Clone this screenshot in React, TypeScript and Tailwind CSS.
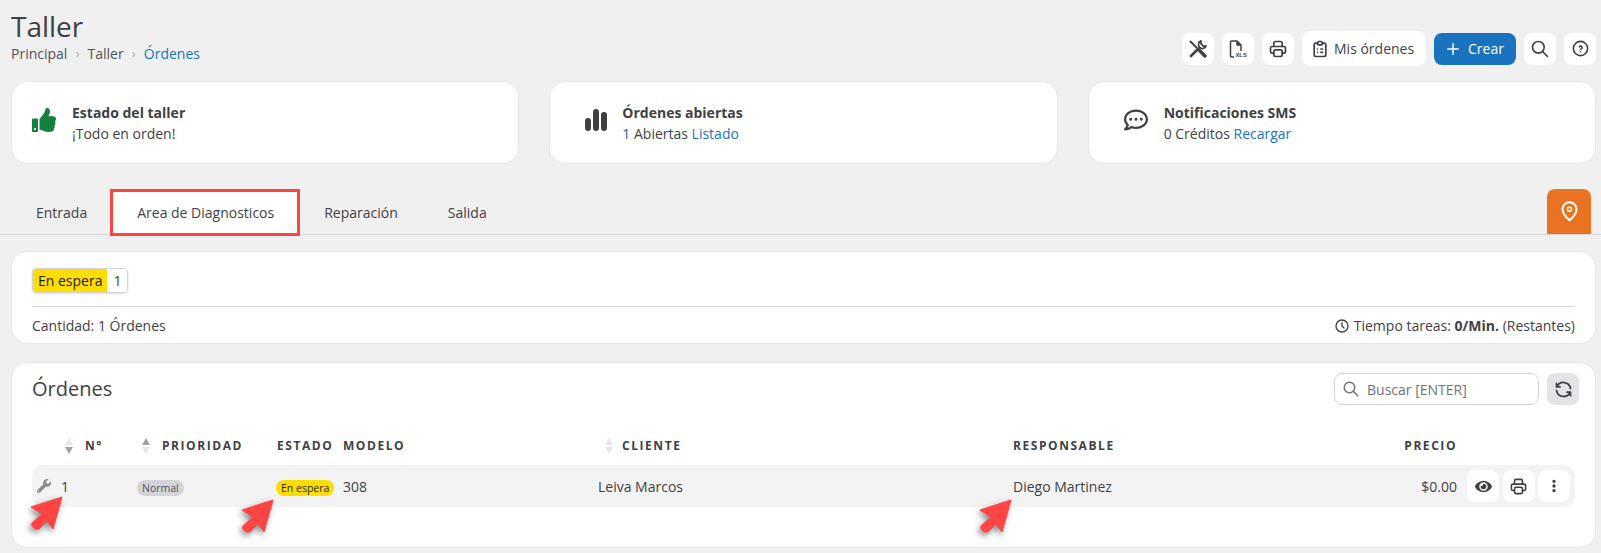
import React from "react";
import {
  TbClipboardList,
  TbClock,
  TbDotsVertical,
  TbHelpCircle,
  TbPlus,
  TbPrinter,
  TbRefresh,
  TbSearch,
} from "react-icons/tb";
import { FaEye, FaRegCommentDots, FaThumbsUp, FaWrench } from "react-icons/fa";

const tableCols = "grid grid-cols-[105px_140px_67px_254px_415px_1fr_118px] items-center";

function IconButton({ children }: { children: React.ReactNode }) {
  return (
    <button className="w-8 h-8 rounded-lg bg-white flex items-center justify-center text-[#3f3f46]">
      {children}
    </button>
  );
}

function ToolsIcon() {
  return (
    <svg width="20" height="20" viewBox="0 0 20 20" fill="none" stroke="#3f3f46" strokeLinecap="round">
      <path d="M2.5 2.5l6 6" strokeWidth="2" />
      <path d="M11.5 11.5l5.5 5.5" strokeWidth="3.4" />
      <path d="M3 17l7.5-7.5" strokeWidth="2.6" />
      <path d="M13 1.8A4 4 0 1 0 18.2 7L15.5 7.2 13 4.8z" strokeWidth="1.7" strokeLinejoin="round" />
    </svg>
  );
}

function XlsIcon() {
  return (
    <svg width="20" height="20" viewBox="0 0 20 20" fill="none" stroke="#3f3f46" strokeWidth="1.5">
      <path d="M6 18H3.5a1 1 0 0 1-1-1V3a1 1 0 0 1 1-1H9l4 4v6" strokeLinejoin="round" />
      <path d="M9 2v4h4" fill="#3f3f46" strokeLinejoin="round" />
      <text x="7.5" y="18" fontSize="5.8" fontWeight="700" stroke="none" fill="#3f3f46" fontFamily="'Liberation Sans', sans-serif">
        XLS
      </text>
    </svg>
  );
}

function BarsIcon() {
  return (
    <svg width="22" height="22" viewBox="0 0 22 22" fill="#3f3f46">
      <rect x="0" y="9" width="6" height="13" rx="3" />
      <rect x="8" y="0" width="6" height="22" rx="3" />
      <rect x="16" y="3" width="6" height="19" rx="3" />
    </svg>
  );
}

function PinIcon() {
  return (
    <svg width="17" height="21" viewBox="0 0 17 21" fill="none" stroke="#ffffff" strokeWidth="2">
      <path d="M8.5 1.2a7 7 0 0 0-7 7c0 4 3.8 8.3 7 11 3.2-2.7 7-7 7-11a7 7 0 0 0-7-7z" strokeLinejoin="round" />
      <circle cx="8.5" cy="8.2" r="2" strokeWidth="1.4" />
    </svg>
  );
}

function SortArrows({ active }: { active: "up" | "down" | "none" }) {
  return (
    <span className="flex flex-col gap-[2px] w-2">
      <span className={`w-0 h-0 border-x-[4px] border-x-transparent border-b-[7px] ${active === "up" ? "border-b-[#9ca3af]" : "border-b-[#e5e7eb]"}`} />
      <span className={`w-0 h-0 border-x-[4px] border-x-transparent border-t-[7px] ${active === "down" ? "border-t-[#9ca3af]" : "border-t-[#e5e7eb]"}`} />
    </span>
  );
}

function Arrow({ className }: { className: string }) {
  return (
    <svg
      width="44"
      height="44"
      viewBox="0 0 44 44"
      className={`absolute drop-shadow-[-2px_3px_3px_rgba(0,0,0,0.45)] ${className}`}
    >
      <path
        d="M40 2 L9 12 L20 19 L10 28 Q9 30 11 32 L14 34 Q16 35 18 33 L25 26 L31 34 Z"
        fill="#ff4444"
        stroke="#ff4444"
        strokeLinejoin="round"
      />
    </svg>
  );
}

function StatCard({ icon, title, iconCol, children }: { icon: React.ReactNode; title: string; iconCol: string; children: React.ReactNode }) {
  return (
    <div className="h-[83px] bg-white rounded-2xl border border-[#e6e6e6] flex items-center">
      <div className={`flex justify-start pb-[5px] ${iconCol}`}>{icon}</div>
      <div className="leading-[21px]">
        <div className="font-bold">{title}</div>
        <div>{children}</div>
      </div>
    </div>
  );
}

export default function App() {
  return (
    <div className="w-[1601px] h-[553px] overflow-hidden bg-[#f0f0f0] text-[14px] text-[#3f3f46] font-['Open_Sans',sans-serif]">
      <div className="pl-[11px] pr-[5px]">
        {/* Header */}
        <div className="h-[81px] flex justify-between">
          <div className="pt-[8px]">
            <h1 className="text-[28px] leading-[36px]">Taller</h1>
            <div className="flex items-center gap-[8.25px] leading-[20px] text-[#52525b]">
              <span>Principal</span>
              <span className="text-[#a1a1aa] text-[12px]">›</span>
              <span>Taller</span>
              <span className="text-[#a1a1aa] text-[12px]">›</span>
              <span className="text-[#1a73bf]">Órdenes</span>
            </div>
          </div>
          <div className="flex items-center gap-2 pt-[16px] h-[81px]">
            <IconButton><ToolsIcon /></IconButton>
            <IconButton><XlsIcon /></IconButton>
            <IconButton><TbPrinter size={20} /></IconButton>
            <button className="h-[35px] w-[124px] rounded-lg bg-white flex items-center justify-start pl-[8px] gap-[4px] text-[14px]">
              <TbClipboardList size={20} />
              Mis órdenes
            </button>
            <button className="h-8 w-[82px] rounded-lg bg-[#1a73bf] text-white flex items-center justify-start pl-[10px] gap-[6px] text-[14px]">
              <TbPlus size={18} />
              Crear
            </button>
            <IconButton><TbSearch size={20} /></IconButton>
            <IconButton><TbHelpCircle size={19} /></IconButton>
          </div>
        </div>

        {/* Resumen */}
        <div className="grid grid-cols-3 gap-[30px]">
          <StatCard iconCol="w-[60px] pl-[20px]" icon={<FaThumbsUp size={24} className="text-[#15803d]" />} title="Estado del taller">
            ¡Todo en orden!
          </StatCard>
          <StatCard iconCol="w-[72px] pl-[35px]" icon={<BarsIcon />} title="Órdenes abiertas">
            <span className="text-[#1a5f9c]">1</span> Abiertas <span className="text-[#1a73bf]">Listado</span>
          </StatCard>
          <StatCard iconCol="w-[75px] pl-[35px]" icon={<FaRegCommentDots size={24} />} title="Notificaciones SMS">
            0 Créditos <span className="text-[#1a73bf]">Recargar</span>
          </StatCard>
        </div>
      </div>

      {/* Tabs */}
      <div className="mt-[25px] h-[46px] border-b border-[#d4d4d8] pl-[11px] pr-[10px] flex justify-between">
        <div className="flex">
          <div className="h-[45px] pt-[1px] px-[25px] flex items-center">Entrada</div>
          <div className="relative h-[46px] px-[25px] flex items-center bg-white rounded-t-lg">
            Area de Diagnosticos
            <span className="absolute -left-[2px] -right-[1px] top-0 -bottom-[1px] border-[3px] border-[#ff4444]" />
          </div>
          <div className="h-[45px] pt-[1px] px-[25px] flex items-center">Reparación</div>
          <div className="h-[45px] pt-[1px] px-[25px] flex items-center">Salida</div>
        </div>
        <div className="w-[44px] h-[45px] bg-[#e97322] rounded-t-lg flex items-center justify-center">
          <PinIcon />
        </div>
      </div>

      <div className="pl-[11px] pr-[5px]">
        {/* Estados */}
        <div className="mt-[16px] h-[93px] bg-white rounded-2xl border border-[#e6e6e6] px-[20px] pt-[16px]">
          <div className="inline-flex h-[25px] rounded border border-[#d4d4d8] overflow-hidden shadow-sm">
            <span className="bg-[#ffdd00] text-[#1c1c1c] px-[5px] leading-[23px]">En espera</span>
            <span className="bg-white px-[6px] leading-[23px]">1</span>
          </div>
          <div className="mt-[13px] border-t border-[#d4d4d8] pt-[9px] flex justify-between leading-[20px]">
            <span>Cantidad: 1 Órdenes</span>
            <span className="flex items-center gap-[4px]">
              <TbClock size={16} />
              <span>
                Tiempo tareas: <b>0/Min.</b> (Restantes)
              </span>
            </span>
          </div>
        </div>

        {/* Órdenes */}
        <div className="mt-[18px] h-[186px] bg-white rounded-2xl border border-[#e6e6e6] px-[20px] pt-[10px]">
          <div className="flex items-center justify-between h-[32px]">
            <h2 className="text-[20px]">Órdenes</h2>
            <div className="flex items-center gap-2 mr-[-4px]">
              <div className="w-[205px] h-[32px] rounded-lg border border-[#d4d4d8] flex items-center gap-[7px] pl-[7px] text-[#71717a]">
                <TbSearch size={18} />
                Buscar [ENTER]
              </div>
              <button className="w-8 h-8 rounded-lg bg-[#e4e4e7] flex items-center justify-center">
                <TbRefresh size={21} />
              </button>
            </div>
          </div>

          <div className={`${tableCols} h-[20px] mt-[31px] text-[12px] font-bold tracking-[0.13em] text-[#3f3f46]`}>
            <div className="flex items-center gap-[12px] pl-[33px]">
              <SortArrows active="down" />
              N°
            </div>
            <div className="flex items-center gap-[12px] pl-[5px]">
              <SortArrows active="up" />
              PRIORIDAD
            </div>
            <div>ESTADO</div>
            <div className="-ml-[1px]">MODELO</div>
            <div className="flex items-center gap-[9px] pl-[7px]">
              <SortArrows active="none" />
              CLIENTE
            </div>
            <div className="flex justify-between">
              <span>RESPONSABLE</span>
              <span>PRECIO</span>
            </div>
            <div />
          </div>

          <div className="relative mt-[9px] h-[42px] bg-[#f3f3f3] rounded-xl">
            <div className={`${tableCols} h-full`}>
              <div className="flex items-center gap-[10px] pl-[5px]">
                <FaWrench size={14} className="text-[#8a8a8a]" />
                1
              </div>
              <div>
                <span className="inline-block h-[16px] leading-[16px] px-[5px] rounded-full bg-[#d4d4d8] text-[10.5px] text-[#52525b]">Normal</span>
              </div>
              <div className="-ml-[1px]">
                <span className="inline-block h-[16px] leading-[16px] px-[5px] rounded-full bg-[#ffdd00] text-[10.5px] text-[#1c1c1c] whitespace-nowrap">En espera</span>
              </div>
              <div className="-ml-[1px]">308</div>
              <div>Leiva Marcos</div>
              <div className="flex justify-between">
                <span>Diego Martinez</span>
                <span>$0.00</span>
              </div>
              <div className="flex items-center gap-[3.5px] pl-[10px]">
                <IconButton><FaEye size={17} /></IconButton>
                <IconButton><TbPrinter size={19} /></IconButton>
                <IconButton><TbDotsVertical size={16} strokeWidth={3} /></IconButton>
              </div>
            </div>
            <Arrow className="left-[-10px] top-[30px]" />
            <Arrow className="left-[201px] top-[33px]" />
            <Arrow className="left-[939px] top-[33px]" />
          </div>
        </div>
      </div>
    </div>
  );
}
